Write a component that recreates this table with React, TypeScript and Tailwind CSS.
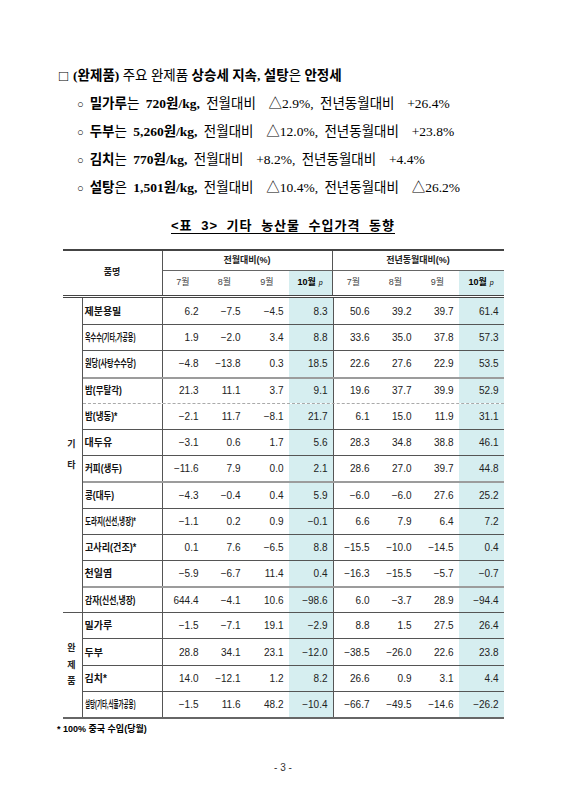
import React from "react";

type Row = [string, ...number[]];

const rows: Row[] = [
  ["제분용밀", 6.2, -7.5, -4.5, 8.3, 50.6, 39.2, 39.7, 61.4],
  ["옥수수(기타,가공용)", 1.9, -2.0, 3.4, 8.8, 33.6, 35.0, 37.8, 57.3],
  ["원당(사탕수수당)", -4.8, -13.8, 0.3, 18.5, 22.6, 27.6, 22.9, 53.5],
  ["밤(무탈각)", 21.3, 11.1, 3.7, 9.1, 19.6, 37.7, 39.9, 52.9],
  ["밤(냉동)*", -2.1, 11.7, -8.1, 21.7, 6.1, 15.0, 11.9, 31.1],
  ["대두유", -3.1, 0.6, 1.7, 5.6, 28.3, 34.8, 38.8, 46.1],
  ["커피(생두)", -11.6, 7.9, 0.0, 2.1, 28.6, 27.0, 39.7, 44.8],
  ["콩(대두)", -4.3, -0.4, 0.4, 5.9, -6.0, -6.0, 27.6, 25.2],
  ["도라지(신선,냉장)*", -1.1, 0.2, 0.9, -0.1, 6.6, 7.9, 6.4, 7.2],
  ["고사리(건조)*", 0.1, 7.6, -6.5, 8.8, -15.5, -10.0, -14.5, 0.4],
  ["천일염", -5.9, -6.7, 11.4, 0.4, -16.3, -15.5, -5.7, -0.7],
  ["감자(신선,냉장)", 644.4, -4.1, 10.6, -98.6, 6.0, -3.7, 28.9, -94.4],
  ["밀가루", -1.5, -7.1, 19.1, -2.9, 8.8, 1.5, 27.5, 26.4],
  ["두부", 28.8, 34.1, 23.1, -12.0, -38.5, -26.0, 22.6, 23.8],
  ["김치*", 14.0, -12.1, 1.2, 8.2, 26.6, 0.9, 3.1, 4.4],
  ["설탕(기타,식물가공용)", -1.5, 11.6, 48.2, -10.4, -66.7, -49.5, -14.6, -26.2],
];

const fmt = (n: number) => (n < 0 ? "\u2212" + Math.abs(n).toFixed(1) : n.toFixed(1));

// names get squeezed to fit the cell, like the 장평 setting in the source doc
function squeeze(name: string) {
  const hangul = (name.match(/[가-힣]/g) || []).length;
  const natural = hangul * 10 + (name.length - hangul) * 3.5;
  if (natural > 55) return 55 / natural;
  return name.includes("(") ? 0.85 : 1;
}

const cols = "grid grid-cols-[79px_42px_42px_43px_44px_42px_42px_42px_45px]";

// top border of each body row
function sep(i: number) {
  if (i === 0) return "";
  if (i === 3 || i === 7 || i === 11) return "border-t-2 border-[#9c9c9c]";
  if (i === 4) return "border-t border-dashed border-[#aaa]";
  return "border-t border-[#555]";
}

function Month({ m, hot, first, last }: { m: string; hot?: boolean; first?: boolean; last?: boolean }) {
  return (
    <div
      className={
        "flex items-center justify-center border-t border-t-[#666] text-[9px] " +
        (first ? "border-l border-l-[#555] " : "") +
        (last ? "border-r border-r-[#555] " : "") +
        (hot ? "bg-[#d6eef0] text-black font-bold" : "text-[#444] font-normal")
      }
    >
      {m}
      {hot && <span className="ml-[3px] text-[7px] italic font-normal">p</span>}
    </div>
  );
}

function Bullet({ children }: { children: React.ReactNode }) {
  return (
    <div className="h-[28px] flex items-center pl-[77px] whitespace-pre [word-spacing:3px]">
      <span className="text-[11px] mr-[6px]">○</span>
      <span>{children}</span>
    </div>
  );
}

export default function App() {
  return (
    <div className="w-[566px] h-[800px] bg-white text-black pt-[62px] font-['Liberation_Serif','Noto_Sans_CJK_KR',serif] text-[13.5px]">
      <div className="h-[28px] flex items-center pl-[59px] whitespace-pre">
        <span className="text-[15px] mr-[5px] leading-none">□</span>
        <b>(완제품)</b> 주요 완제품 <b>상승세 지속, 설탕</b>은 <b>안정세</b>
      </div>
      <Bullet>
        <b>밀가루</b>는 <b>720원/kg,</b> 전월대비  △2.9%, 전년동월대비  +26.4%
      </Bullet>
      <Bullet>
        <b>두부</b>는 <b>5,260원/kg,</b> 전월대비  △12.0%, 전년동월대비  +23.8%
      </Bullet>
      <Bullet>
        <b>김치</b>는 <b>770원/kg,</b> 전월대비  +8.2%, 전년동월대비  +4.4%
      </Bullet>
      <Bullet>
        <b>설탕</b>은 <b>1,501원/kg,</b> 전월대비  △10.4%, 전년동월대비  △26.2%
      </Bullet>

      <div className="mt-[14px] h-[20px] flex items-center justify-center font-['Liberation_Sans','Noto_Sans_CJK_KR',sans-serif] text-[13px] font-bold">
        <span className="underline underline-offset-[3px] whitespace-pre tracking-[1px] [word-spacing:4px]">
          {"<표 3> 기타 농산물 수입가격 동향"}
        </span>
      </div>

      <div className="mt-[13px] mx-auto w-[441px] font-['Liberation_Sans','Noto_Sans_CJK_KR',sans-serif] text-[10px] text-[#222]">
        {/* header */}
        <div className="grid grid-cols-[99px_42px_42px_43px_44px_42px_42px_42px_45px] grid-rows-[19px_25px] border-t-2 border-b-[3px] border-double border-[#444] font-bold">
          <div className="row-span-2 flex items-center justify-center text-[9px]">품명</div>
          <div className="col-span-4 flex items-center justify-center border-l border-r border-[#555] text-[9px]">전월대비(%)</div>
          <div className="col-span-4 flex items-center justify-center text-[9px]">전년동월대비(%)</div>
          <Month m="7월" first />
          <Month m="8월" />
          <Month m="9월" />
          <Month m="10월" hot last />
          <Month m="7월" />
          <Month m="8월" />
          <Month m="9월" />
          <Month m="10월" hot />
        </div>

        {/* body */}
        <div className="flex border-b-2 border-[#666]">
          <div className="w-[20px] flex flex-col border-r border-[#555] text-[9px] font-bold">
            <div className="h-[314.4px] flex flex-col items-center justify-center gap-[8px] pr-[1px]">
              <span>기</span>
              <span>타</span>
            </div>
            <div className="h-[104.8px] flex flex-col items-center justify-center gap-[3px] border-t border-[#555] pr-[1px]">
              <span>완</span>
              <span>제</span>
              <span>품</span>
            </div>
          </div>
          <div className="flex-1 flex flex-col">
            {rows.map((r, i) => {
              const [name, ...vals] = r;
              return (
                <div key={name} className={cols + " h-[26.2px] " + sep(i)}>
                  <div className="flex items-center pl-[2px] pt-[1px]">
                    <span
                      className="inline-block origin-left whitespace-nowrap text-[10px] leading-[12px] font-bold text-[#111]"
                      style={{ transform: `scaleX(${squeeze(name)})` }}
                    >
                      {name}
                    </span>
                  </div>
                  {vals.map((v, j) => (
                    <div
                      key={j}
                      className={
                        "flex items-center justify-end pr-[5px] " +
                        (j === 0 || j === 4 ? "border-l border-[#555] " : "") +
                        (j === 3 || j === 7 ? "bg-[#d6eef0]" : "")
                      }
                    >
                      {fmt(v)}
                    </div>
                  ))}
                </div>
              );
            })}
          </div>
        </div>
      </div>

      <div className="mt-[3px] h-[16px] flex items-center pl-[57px] font-['Liberation_Sans','Noto_Sans_CJK_KR',sans-serif] text-[9px] font-bold whitespace-pre">
        {"* 100% 중국 수입(당월)"}
      </div>

      <div className="mt-[21px] h-[16px] flex items-center justify-center font-['Liberation_Sans','Noto_Sans_CJK_KR',sans-serif] text-[10px] text-[#333] whitespace-pre">
        {"- 3 -"}
      </div>
    </div>
  );
}
